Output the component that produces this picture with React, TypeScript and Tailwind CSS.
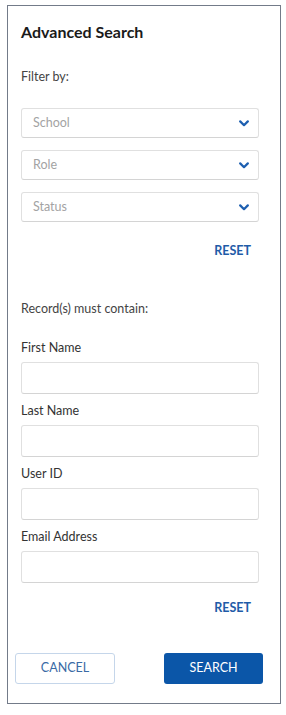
import React from 'react';

const ChevronDown = () => (
  <svg width="10" height="7" viewBox="0 0 10 7" fill="none">
    <path d="M1.2 1.4L5 5.2L8.8 1.4" stroke="#1d5fb0" strokeWidth="2.2" strokeLinecap="round" strokeLinejoin="round" />
  </svg>
);

function SelectBox({ label }: { label: string }) {
  return (
    <div className="h-[30px] rounded-[3px] border border-[#e0e0e0] border-b-[#d4d4d4] bg-white flex items-center justify-between pl-[11px] pr-[9px]">
      <span className="text-[12.5px] text-[#a3a3a3]">{label}</span>
      <ChevronDown />
    </div>
  );
}

function Field({ label, first }: { label: string; first?: boolean }) {
  return (
    <div className={first ? 'mt-[21px]' : 'mt-[8px]'}>
      <div className="h-[18px] leading-[18px] text-[12.5px] text-[#333]">{label}</div>
      <div className="mt-[5px] h-[32px] rounded-[3px] border border-[#e0e0e0] border-b-[#d4d4d4] bg-white" />
    </div>
  );
}

function App() {
  const selects = ['School', 'Role', 'Status'];
  const fields = ['First Name', 'Last Name', 'User ID', 'Email Address'];

  return (
    <div className="min-h-screen bg-white pt-[5px] pl-[7px]" style={{ fontFamily: 'Lato, "Open Sans", sans-serif' }}>
      <div className="w-[274px] border-[1.5px] border-[#737b89] bg-white pt-[14px] pb-[19px]">
        <div className="pl-[13px] pr-[21px]">
          {/* Header */}
          <h1 className="h-[24px] leading-[24px] text-[16px] font-bold text-[#1a1a1a]">Advanced Search</h1>

          {/* Filters */}
          <div className="mt-[24px] h-[18px] leading-[18px] text-[12.5px] text-[#444]">Filter by:</div>
          <div className="mt-[22px] flex flex-col gap-[12px]">
            {selects.map((s) => (
              <SelectBox key={s} label={s} />
            ))}
          </div>
          <div className="mt-[20px] flex justify-end pr-[8px]">
            <button className="h-[18px] leading-[18px] text-[12.5px] font-bold text-[#1f5ca8]">RESET</button>
          </div>

          {/* Text fields */}
          <div className="mt-[40px] h-[18px] leading-[18px] text-[12.5px] text-[#444]">Record(s) must contain:</div>
          {fields.map((f, i) => (
            <Field key={f} label={f} first={i === 0} />
          ))}
          <div className="mt-[16px] flex justify-end pr-[8px]">
            <button className="h-[18px] leading-[18px] text-[12.5px] font-bold text-[#1f5ca8]">RESET</button>
          </div>
        </div>

        {/* Actions */}
        <div className="mt-[36px] pl-[7px] pr-[17px] flex justify-between">
          <button className="w-[100px] h-[31px] rounded-[3px] border border-[#c5d6ea] bg-white text-[12.5px] text-[#3a6aa5]">CANCEL</button>
          <button className="w-[99px] h-[31px] rounded-[3px] bg-[#0b56a8] text-[12.5px] text-white">SEARCH</button>
        </div>
      </div>
    </div>
  );
}

export default App;
